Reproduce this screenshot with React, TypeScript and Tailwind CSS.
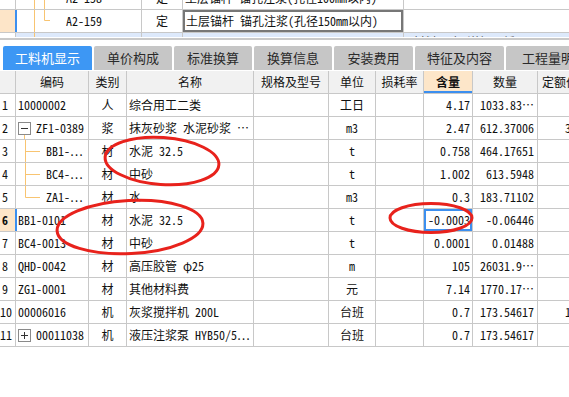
import clsx from "clsx";

type TreeKind = "minus" | "plus" | "branch" | "last";

type Row = {
  n: string;
  code: string;
  tree?: TreeKind;
  type: string;
  name: string;
  unit: string;
  qty: string;
  amount: string;
  extra?: string;
  selected?: boolean;
};

const rows: Row[] = [
  { n: "1", code: "10000002", type: "人", name: "综合用工二类", unit: "工日", qty: "4.17", amount: "1033.83⋯" },
  { n: "2", code: "ZF1-0389", tree: "minus", type: "浆", name: "抹灰砂浆 水泥砂浆 ⋯", unit: "m3", qty: "2.47", amount: "612.37006", extra: "3" },
  { n: "3", code: "BB1-⋯", tree: "branch", type: "材", name: "水泥 32.5", unit: "t", qty: "0.758", amount: "464.17651" },
  { n: "4", code: "BC4-⋯", tree: "branch", type: "材", name: "中砂", unit: "t", qty: "1.002", amount: "613.5948" },
  { n: "5", code: "ZA1-⋯", tree: "last", type: "材", name: "水", unit: "m3", qty: "0.3", amount: "183.71102" },
  { n: "6", code: "BB1-0101", type: "材", name: "水泥 32.5", unit: "t", qty: "-0.0003", amount: "-0.06446", selected: true },
  { n: "7", code: "BC4-0013", type: "材", name: "中砂", unit: "t", qty: "0.0001", amount: "0.01488" },
  { n: "8", code: "QHD-0042", type: "材", name: "高压胶管 φ25", unit: "m", qty: "105", amount: "26031.9⋯" },
  { n: "9", code: "ZG1-0001", type: "材", name: "其他材料费", unit: "元", qty: "7.14", amount: "1770.17⋯" },
  { n: "10", code: "00006016", type: "机", name: "灰浆搅拌机 200L", unit: "台班", qty: "0.7", amount: "173.54617", extra: "1" },
  { n: "11", code: "00011038", tree: "plus", type: "机", name: "液压注浆泵 HYB50/5⋯", unit: "台班", qty: "0.7", amount: "173.54617" },
];

const tabs = [
  { label: "工料机显示", w: "w-[89px]" },
  { label: "单价构成", w: "w-[78px]" },
  { label: "标准换算", w: "w-[78px]" },
  { label: "换算信息", w: "w-[78px]" },
  { label: "安装费用", w: "w-[79px]" },
  { label: "特征及内容", w: "w-[89px]" },
  { label: "工程量明细", w: "w-[80px]" },
];

function TreeMark({ kind }: { kind: TreeKind }) {
  if (kind === "minus" || kind === "plus") {
    return (
      <svg width="20" height="22" className="shrink-0">
        <rect x="2.5" y="5.5" width="12" height="12" fill="white" stroke="#8a8a8a" />
        <line x1="5" y1="11.5" x2="12" y2="11.5" stroke="#333" />
        {kind === "plus" && <line x1="8.5" y1="8" x2="8.5" y2="15" stroke="#333" />}
        {kind === "minus" && <line x1="8.5" y1="18" x2="8.5" y2="22" stroke="#f8c471" />}
      </svg>
    );
  }
  return (
    <svg width="30" height="22" className="shrink-0">
      <line x1="9.5" y1="0" x2="9.5" y2={kind === "last" ? 11.5 : 22} stroke="#f8c471" />
      <line x1="9.5" y1="11.5" x2="24" y2="11.5" stroke="#f8c471" />
    </svg>
  );
}

function Cell({ w, className, children }: { w: string; className?: string; children?: React.ReactNode }) {
  return (
    <div className={clsx("h-full shrink-0 border-r border-[#c8c8c8] flex items-center overflow-hidden whitespace-nowrap", w, className)}>
      {children}
    </div>
  );
}

function TopTree({ part }: { part: 1 | 2 | 3 }) {
  return (
    <svg width="34" height="22" className="shrink-0">
      <line x1="18.5" y1="0" x2="18.5" y2="22" stroke="#f8c471" />
      {part === 1 && <line x1="28.5" y1="0" x2="28.5" y2="22" stroke="#f8c471" />}
      {part === 2 && (
        <>
          <line x1="28.5" y1="0" x2="28.5" y2="10.5" stroke="#f8c471" />
          <line x1="28.5" y1="10.5" x2="44" y2="10.5" stroke="#f8c471" />
        </>
      )}
    </svg>
  );
}

export default function App() {
  return (
    <div className="relative w-[569px] h-[397px] overflow-hidden bg-white text-[12px] text-[#111] font-[family-name:'Noto_Sans_Mono_CJK_SC','Noto_Sans_CJK_SC',monospace]">
      {/* upper list, scrolled */}
      <div className="h-[37px] overflow-hidden">
        <div className="-mt-[13px]">
          <div className="flex h-[23px] border-b border-[#c8c8c8]">
            <Cell w="w-[16px]" />
            <Cell w="w-[126px]">
              <TopTree part={1} />
              <span className="pl-[16px]">A2-158</span>
            </Cell>
            <Cell w="w-[41px]" className="justify-center">定</Cell>
            <Cell w="w-[221px]" className="pl-[2px]">土层锚杆 锚孔注浆(孔径100mm以内)</Cell>
            <Cell w="w-[180px]" />
          </div>
          <div className="flex h-[23px] border-b border-[#c8c8c8]">
            <Cell w="w-[16px]" className="bg-[#fde5c8] border-r-[#3c8fef] shadow-[1px_0_0_#3c8fef]" />
            <Cell w="w-[126px]">
              <TopTree part={2} />
              <span className="pl-[16px]">A2-159</span>
            </Cell>
            <Cell w="w-[41px]" className="justify-center">定</Cell>
            <Cell w="w-[221px]" className="pl-[3px] shadow-[inset_0_0_0_2px_#777777]">
              土层锚杆 锚孔注浆(孔径150mm以内)
            </Cell>
            <Cell w="w-[180px]" />
          </div>
          <div className="flex h-[23px] border-b border-[#c8c8c8]">
            <Cell w="w-[16px]" />
            <Cell w="w-[126px]" className="bg-[#dde9fb]">
              <TopTree part={3} />
            </Cell>
            <Cell w="w-[41px]" className="bg-[#dde9fb]" />
            <Cell w="w-[221px]" className="bg-[#dde9fb]" />
            <Cell w="w-[180px]" className="bg-[#dde9fb] items-start pl-[9px] pt-[3px] leading-none text-[#555]">
              材料工序 详细图纸
            </Cell>
          </div>
        </div>
      </div>
      <div className="h-[1px] bg-white" />
      <div className="h-[2px] bg-[#c9c9c9]" />
      <div className="h-[6px] bg-white" />

      {/* tabs */}
      <div className="flex gap-[2px] pl-[3px] h-[24px] font-[family-name:'Noto_Sans_CJK_SC',sans-serif] text-[13px]">
        {tabs.map((t, i) => (
          <div
            key={t.label}
            className={clsx(
              "shrink-0 flex items-center justify-center rounded-t-[2px] whitespace-nowrap overflow-hidden",
              t.w,
              i === 0 ? "bg-[#3d97f4] text-white" : "bg-[#c6c6c6] text-[#2a2a2a]",
              i === 6 && "justify-start pl-[16px]"
            )}
          >
            {t.label}
          </div>
        ))}
      </div>
      <div className="h-[1px] bg-white" />

      {/* header */}
      <div className="flex h-[23px] border-b border-[#c8c8c8] bg-[#f1f1f1]">
        <Cell w="w-[16px]" />
        <Cell w="w-[73px]" className="justify-center">编码</Cell>
        <Cell w="w-[38px]" className="justify-center">类别</Cell>
        <Cell w="w-[127px]" className="justify-center">名称</Cell>
        <Cell w="w-[75px]" className="justify-center">规格及型号</Cell>
        <Cell w="w-[47px]" className="justify-center">单位</Cell>
        <Cell w="w-[48px]" className="justify-center">损耗率</Cell>
        <Cell w="w-[49px]" className="justify-center bg-[#fde6c9] font-bold shadow-[inset_0_-2px_0_#3c8fef]">含量</Cell>
        <Cell w="w-[65px]" className="justify-center">数量</Cell>
        <Cell w="w-[60px]" className="pl-[4px]">定额价</Cell>
      </div>

      {/* body */}
      {rows.map((r) => (
        <div key={r.n} className="flex h-[23px] border-b border-[#c8c8c8]">
          <Cell
            w="w-[16px]"
            className={clsx(r.selected && "bg-[#fde5c8] font-bold border-r-[#3c8fef]", r.n.length > 1 ? "pl-0" : "pl-[2px]")}
          >
            {r.n}
          </Cell>
          <Cell w="w-[73px]" className={clsx(r.selected && "shadow-[inset_1px_0_0_#3c8fef]", !r.tree && "pl-[2px]")}>
            {r.tree && <TreeMark kind={r.tree} />}
            <span>{r.code}</span>
          </Cell>
          <Cell w="w-[38px]" className="justify-center">{r.type}</Cell>
          <Cell w="w-[127px]" className="pl-[2px]">{r.name}</Cell>
          <Cell w="w-[75px]" />
          <Cell w="w-[47px]" className="justify-center">{r.unit}</Cell>
          <Cell w="w-[48px]" />
          <Cell w="w-[49px]" className={clsx("justify-end pr-[2px]", r.selected && "shadow-[inset_0_0_0_2px_#3c8fef]")}>
            {r.qty}
          </Cell>
          <Cell w="w-[65px]" className="justify-end pr-[3px]">{r.amount}</Cell>
          <Cell w="w-[60px]" className="pl-[27px]">{r.extra}</Cell>
        </div>
      ))}

      {/* red annotation marks */}
      <svg className="absolute left-0 top-0 pointer-events-none" width="569" height="397">
        <ellipse cx="162" cy="161" rx="57" ry="23.5" fill="none" stroke="#e8221c" strokeWidth="3" transform="rotate(4 162 161)" />
        <ellipse cx="130" cy="227" rx="73" ry="26.5" fill="none" stroke="#e8221c" strokeWidth="3" transform="rotate(-3 130 227)" />
        <ellipse cx="431" cy="218" rx="41" ry="14.5" fill="none" stroke="#e8221c" strokeWidth="3" />
      </svg>
    </div>
  );
}
